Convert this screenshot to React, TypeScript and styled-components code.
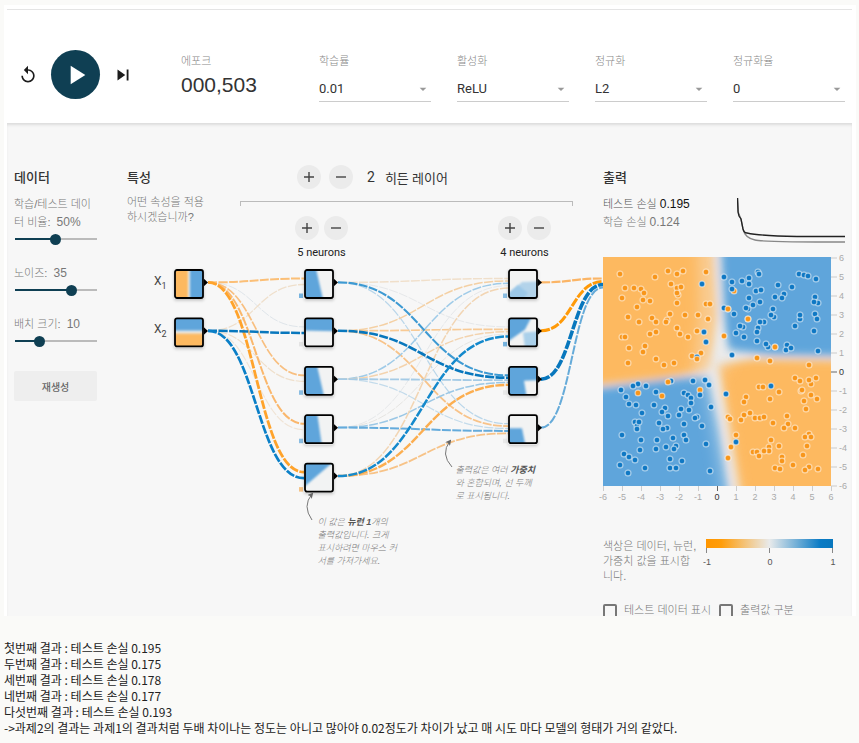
import React, { useState } from "react";
import styled, { createGlobalStyle } from "styled-components";
import { MdReplay, MdPlayArrow, MdSkipNext, MdArrowDropDown } from "react-icons/md";

const ORANGE = "#fdb960";
const BLUE = "#5ea5db";
const PALE = "#e8eaeb";

const sans = `"Liberation Sans", "Noto Sans CJK KR", sans-serif`;
const ui = `Roboto, "Noto Sans CJK KR", sans-serif`;

const GlobalStyle = createGlobalStyle`
  *, *::before, *::after { box-sizing: border-box; }
  body {
    margin: 0;
    background: #fafaf8;
    color: #222;
    font-family: ${sans};
    font-size: 12px;
  }
`;

const Page = styled.main`
  padding: 5px 3px 8px 4px;
`;

const Card = styled.section`
  padding: 4px 4px 0 3px;
  background: #fff;
`;

const TopBar = styled.header`
  display: flex;
  height: 114px;
  border-top: 1px solid #e4e4e4;
  padding-right: 7px;
`;

const Playback = styled.div`
  flex: 0 0 174px;
  display: flex;
  align-items: center;
  gap: 12px;
  padding: 15px 0 0 10px;
  height: 114px;
`;

const IconButton = styled.button`
  display: flex;
  align-items: center;
  justify-content: center;
  width: 22px;
  height: 32px;
  padding: 0;
  border: 0;
  background: none;
  color: #1c1c1c;
  cursor: pointer;
`;

const PlayButton = styled(IconButton)`
  width: 49px;
  height: 49px;
  border-radius: 50%;
  background: #0f3f53;
  color: #fff;
`;

const Fields = styled.div`
  flex: 1;
  display: grid;
  grid-template-columns: repeat(5, minmax(0, 1fr));
  gap: 26px;
  padding-top: 43px;
`;

const Field = styled.div`
  display: flex;
  flex-direction: column;
  font-family: ${ui};
`;

const FieldLabel = styled.label`
  height: 18px;
  line-height: 18px;
  font-size: 11px;
  font-weight: 300;
  color: #888;
`;

const Epoch = styled.output`
  line-height: 28px;
  font-family: ${sans};
  font-size: 21px;
  color: #333;
`;

const SelectWrap = styled.div`
  display: flex;
  align-items: center;
  margin-top: 5px;
  height: 26px;
  border-bottom: 1px solid #ccc;

  svg {
    margin-left: -16px;
    color: #999;
    pointer-events: none;
  }
`;

const Select = styled.select`
  flex: 1;
  min-width: 0;
  height: 24px;
  padding: 0;
  border: 0;
  appearance: none;
  background: transparent;
  color: #333;
  font-family: ${ui};
  font-size: 13px;
`;

const Panel = styled.div`
  display: grid;
  grid-template-columns: 83px minmax(0, 1fr) 249px;
  padding: 45px 0 0 7px;
  background: #f7f7f7;
  box-shadow: inset 0 3px 3px -1px #dcdcdc;
`;

const Title = styled.h2`
  margin: 0 0 7px;
  height: 20px;
  line-height: 20px;
  font-size: 13px;
  font-weight: 500;
  color: #333;
`;

const DataColumn = styled.section`
  display: flex;
  flex-direction: column;
`;

const SliderGroup = styled.div`
  margin-bottom: 17px;
`;

const SliderLabel = styled.label`
  display: block;
  line-height: 18px;
  font-size: 11px;
  font-weight: 300;
  color: #777;

  span {
    display: inline-block;
    margin-left: 3px;
    line-height: 16px;
    font-size: 12px;
  }
`;

const Range = styled.input`
  display: block;
  width: calc(100% + 10px);
  height: 16px;
  margin: 0 -5px;
  appearance: none;
  background-color: transparent;
  background-position: center;
  background-repeat: no-repeat;
  background-size: calc(100% - 11px) 2px;

  &::-webkit-slider-thumb {
    appearance: none;
    width: 11px;
    height: 11px;
    border-radius: 50%;
    background: #0f3f53;
  }
`;

const Regenerate = styled.button`
  height: 30px;
  margin-top: 5px;
  border: 0;
  border-radius: 2px;
  background: #eee;
  color: #666;
  font-family: ${sans};
  font-size: 10px;
  font-weight: 500;
`;

const Network = styled.section`
  padding-left: 30px;
`;

const NetworkHead = styled.div`
  display: grid;
  grid-template-columns: 113px minmax(0, 1fr);
  padding-right: 30px;
  height: 94px;
`;

const Hint = styled.p`
  margin: 0;
  line-height: 15px;
  font-size: 11px;
  font-weight: 300;
  color: #777;
`;

const FeatureHead = styled.div`
  width: 83px;
`;

const HiddenTitle = styled.div`
  display: flex;
  align-items: center;
  gap: 8px;
  height: 24px;
  margin: -3px 0 12px 57px;
  font-family: ${ui};
  font-size: 13px;
  color: #333;
`;

const HiddenCount = styled.span`
  margin: 0 2px 0 6px;
  font-size: 14px;
`;

const Bracket = styled.div`
  height: 5px;
  border: 1px solid #bbb;
  border-bottom: 0;
`;

const LayerHeads = styled.div`
  display: flex;
  justify-content: space-between;
  padding: 10px 22px 0 55px;
`;

const LayerHead = styled.div`
  display: flex;
  flex-direction: column;
  align-items: center;
  gap: 6px;
  line-height: 14px;
  font-family: ${ui};
  font-size: 11px;
  color: #222;
`;

const ButtonPair = styled.div`
  display: flex;
  gap: 5px;
`;

const RoundButton = styled.button`
  display: flex;
  align-items: center;
  justify-content: center;
  width: 24px;
  height: 24px;
  padding: 0;
  border: 0;
  border-radius: 50%;
  background: #ebebeb;
`;

const Canvas = styled.div`
  position: relative;
`;

const Drawing = styled.svg`
  display: block;
  width: 100%;
  height: auto;
  overflow: visible;
`;

const Callout = styled.p<{ $left: number; $top: number }>`
  position: absolute;
  left: ${(p) => p.$left}%;
  top: ${(p) => p.$top}%;
  width: 86px;
  margin: 0;
  line-height: 13px;
  font-size: 9px;
  font-style: italic;
  font-weight: 300;
  color: #777;
  word-break: break-all;

  b {
    font-weight: 700;
    color: #555;
  }
`;

const OutputHead = styled.div`
  display: flex;
  justify-content: space-between;
  height: 62px;
  padding-right: 7px;
`;

const Loss = styled.div<{ $strong?: boolean }>`
  line-height: 18px;
  font-size: 11px;
  font-weight: 300;
  color: ${(p) => (p.$strong ? "#555" : "#777")};

  span {
    font-size: 12px;
    color: ${(p) => (p.$strong ? "#111" : "#777")};
  }
`;

const LegendRow = styled.div`
  display: flex;
  justify-content: space-between;
  margin-top: 35px;
  padding-right: 15px;
`;

const LegendText = styled(Hint)`
  width: 94px;
  word-break: break-all;
`;

const Checks = styled.div`
  display: flex;
  gap: 8px;
  height: 12px;
  margin-top: 20px;
  overflow: hidden;
`;

const Check = styled.label`
  display: flex;
  align-items: flex-start;
  gap: 7px;
  line-height: 12px;
  font-size: 11px;
  font-weight: 300;
  color: #777;
  white-space: nowrap;

  input {
    flex: none;
    appearance: none;
    width: 14px;
    height: 14px;
    margin: 0;
    border: 2px solid #777;
    border-radius: 2px;
  }
`;

const Results = styled.section`
  margin-top: 24px;
  line-height: 16px;
  font-family: "Noto Sans CJK KR", sans-serif;
  font-size: 12px;
  color: #222;

  p {
    margin: 0;
  }
`;

/* ---------- top bar and data column ---------- */

function SelectField({ id, label, value, options }: { id: string; label: string; value: string; options: string[] }) {
  return (
    <Field>
      <FieldLabel htmlFor={id}>{label}</FieldLabel>
      <SelectWrap>
        <Select id={id} defaultValue={value}>
          {options.map((o) => (
            <option key={o}>{o}</option>
          ))}
        </Select>
        <MdArrowDropDown size={16} />
      </SelectWrap>
    </Field>
  );
}

function Slider(props: { id: string; label: string; unit?: string; min: number; max: number; initial: number }) {
  const { id, label, unit = "", min, max, initial } = props;
  const [value, setValue] = useState(initial);
  const pct = ((value - min) / (max - min)) * 100;
  return (
    <SliderGroup>
      <SliderLabel htmlFor={id}>
        {`${label}: `}
        <span>{`${value}${unit}`}</span>
      </SliderLabel>
      <Range
        id={id}
        type="range"
        min={min}
        max={max}
        value={value}
        onChange={(e) => setValue(Number(e.target.value))}
        style={{ backgroundImage: `linear-gradient(to right, #0f3f53 ${pct}%, #bbb ${pct}%)` }}
      />
    </SliderGroup>
  );
}

function PlusMinus() {
  return (
    <>
      <RoundButton aria-label="추가">
        <svg width="12" height="12" viewBox="0 0 12 12" stroke="#444" strokeWidth="1.4">
          <path d="M1 6H11M6 1V11" />
        </svg>
      </RoundButton>
      <RoundButton aria-label="제거">
        <svg width="12" height="12" viewBox="0 0 12 12" stroke="#444" strokeWidth="1.4">
          <path d="M1 6H11" />
        </svg>
      </RoundButton>
    </>
  );
}

/* ---------- network diagram ---------- */

const PITCH = 48.4;
const top = (row: number) => 269 + row * PITCH;

// [source row, target row, colour, width]
type Link = [number, number, string, number];

const inputLinks: Link[] = [
  [0, 1, "#dfe5ea", 1],
  [1, 0, "#efdfcb", 1.3],
  [1, 2, "#efdfcb", 1.2],
  [1, 3, "#f0e4d6", 1.2],
  [0, 0, "#fbbf77", 2],
  [0, 2, "#f8bf80", 1.7],
  [0, 3, "#fab76c", 2],
  [0, 4, "#ffa32b", 2.8],
  [1, 1, "#0877bd", 2.5],
  [1, 4, "#0a7fc7", 2.7],
];

const hiddenLinks: Link[] = [
  [0, 1, "#e6e8ea", 1],
  [3, 0, "#e6e8ea", 1],
  [3, 1, "#e6e5e2", 1],
  [0, 0, "#f0dfca", 1.4],
  [0, 3, "#b9d6ea", 1.2],
  [2, 3, "#c3dbeb", 1.2],
  [1, 0, "#f4d0a4", 1.5],
  [1, 1, "#f8ca95", 1.7],
  [1, 3, "#f8c389", 1.8],
  [2, 0, "#9fcbe8", 1.5],
  [2, 1, "#f3d3ae", 1.5],
  [2, 2, "#a5cbe6", 1.8],
  [3, 2, "#9bc7e5", 1.5],
  [3, 3, "#64abdc", 2],
  [4, 0, "#f2d5b3", 1.5],
  [4, 3, "#f7c388", 1.8],
  [4, 2, "#fcae50", 2.4],
  [0, 2, "#3d9ad3", 2.1],
  [1, 2, "#0877bd", 2.6],
  [4, 1, "#1489cc", 2.5],
];

const outputLinks: Link[] = [
  [3, 0, "#66abd9", 2],
  [0, 0, "#fbb566", 2.2],
  [1, 0, "#ff9a08", 3],
  [2, 0, "#0877bd", 3.6],
];

function Links({ from, to, inputs, items }: { from: number; to: number; inputs: number; items: Link[] }) {
  const mid = (from + to) / 2;
  return (
    <g fill="none" strokeDasharray="9 1.4">
      {items.map(([a, b, color, w]) => {
        const y1 = top(a) + 13.4;
        const y2 = top(b) + 15.5 + ((a - inputs / 2) / inputs) * 12;
        return <path key={`${a}-${b}`} d={`M${from} ${y1}C${mid} ${y1} ${mid} ${y2} ${to} ${y2}`} stroke={color} strokeWidth={w} />;
      })}
    </g>
  );
}

type Patch = [string, string];

function Neuron({ x, row, base = "#f2f3f3", patches, bias }: { x: number; row: number; base?: string; patches: Patch[]; bias?: string }) {
  return (
    <g transform={`translate(${x} ${top(row)})`}>
      {bias && <rect x="-5" y="24.5" width="4" height="4.5" fill={bias} />}
      <path d="M29 9L34 13.5L29 18Z" fill="#000" />
      <rect width="30" height="30" rx="2" fill={base} filter="url(#shade)" />
      <g clipPath="url(#thumb)">
        {patches.map(([points, fill]) => (
          <polygon key={points} points={points} fill={fill} filter="url(#soft)" />
        ))}
      </g>
      <rect x="1" y="1" width="28" height="28" rx="2" fill="none" stroke="#000" strokeWidth="1.8" />
    </g>
  );
}

const fullLeft = "-9,-9 11,-9 22,39 -9,39";

function NetworkDiagram() {
  return (
    <Drawing viewBox="127 262 476 310" role="img" aria-label="신경망">
      <defs>
        <filter id="soft" x="-30%" y="-30%" width="160%" height="160%">
          <feGaussianBlur stdDeviation="1.2" />
        </filter>
        <filter id="shade" x="-30%" y="-30%" width="160%" height="170%">
          <feDropShadow dx="0" dy="1.5" stdDeviation="1.5" floodOpacity="0.22" />
        </filter>
        <clipPath id="thumb">
          <rect x="1" y="1" width="28" height="28" />
        </clipPath>
        <marker id="tip" markerWidth="6" markerHeight="6" refX="4" refY="3" orient="auto" markerUnits="userSpaceOnUse">
          <path d="M0 0L6 3L0 6L1.5 3Z" fill="#666" />
        </marker>
      </defs>
      <Links from={208} to={304} inputs={2} items={inputLinks} />
      <Links from={338} to={508} inputs={5} items={hiddenLinks} />
      <Links from={541} to={603} inputs={4} items={outputLinks} />

      <g fill="#444" fontFamily={ui} fontSize="12">
        <text x="154" y="285">X<tspan fontSize="9" dy="4">1</tspan></text>
        <text x="154" y="333">X<tspan fontSize="9" dy="4">2</tspan></text>
      </g>

      <Neuron x={174} row={0} base={PALE} patches={[["-9,-9 14,-9 14,39 -9,39", ORANGE], ["16,-9 39,-9 39,39 16,39", BLUE]]} />
      <Neuron x={174} row={1} base={PALE} patches={[["-9,-9 39,-9 39,13 -9,13", BLUE], ["-9,16 39,16 39,39 -9,39", ORANGE]]} />

      <Neuron x={304} row={0} bias="#76b3df" patches={[["-9,-9 10,-9 21,39 -9,39", BLUE]]} />
      <Neuron x={304} row={1} bias="#e4e4e4" patches={[["-9,-9 39,-9 39,14 -9,13", BLUE]]} />
      <Neuron x={304} row={2} bias="#8abde2" patches={[[fullLeft, BLUE]]} />
      <Neuron x={304} row={3} bias="#8abde2" patches={[["-9,-9 12,-9 19,39 -9,39", BLUE]]} />
      <Neuron x={304} row={4} bias="#f4c285" patches={[["-9,-9 39,-9 -9,32", BLUE]]} />

      <Neuron x={508} row={0} bias="#8abde2" patches={[["0,26 14,13 39,12 39,39 -9,39", "#b3d3ea"], ["-9,32 10,16 20,24 8,39 -9,39", "#9cc8e8"]]} />
      <Neuron x={508} row={1} bias="#76b3df" patches={[["15,15 39,13 39,39 18,39", "#aad0ea"], ["-9,-9 28,-9 17,12 0,24 -9,28", BLUE]]} />
      <Neuron x={508} row={2} bias="#e9e9e9" patches={[["-9,-9 39,-9 39,14 16,15 20,39 -9,39", BLUE]]} />
      <Neuron x={508} row={3} bias="#e9e9e9" patches={[["-9,14 14,14 19,39 -9,39", BLUE]]} />

      <g fill="none" stroke="#777">
        <path d="M312 520Q302 506 312 494" markerEnd="url(#tip)" />
        <path d="M452 467Q440 454 450 441" markerEnd="url(#tip)" />
      </g>
    </Drawing>
  );
}

/* ---------- output plot ---------- */

const orangeDots =
  "17,17 52,20 65,14 74,17 80,14 103,15 68,27 22,31 31,31 38,32 41,36 19,41 40,43 47,44 74,31 78,30 75,38 74,36 74,46 34,50 103,47 107,47 25,60 36,65 49,61 53,65 67,57 64,63 63,65 82,58 95,58 105,62 74,71 77,77 85,80 94,74 53,75 47,77 19,80 22,80 26,91 42,89 40,95 53,102 25,106 61,108 71,106 89,99 98,96 131,34 125,52 145,62 121,79 172,90 154,101 167,104 206,108 35,136 59,139 97,133 192,121 197,124 213,121 208,127 206,123 156,130 160,130 176,135 167,142 143,140 141,145 198,134 199,133 208,138 214,142 201,144 203,152 147,156 141,158 138,163 125,160 127,162 152,161 157,161 161,160 184,159 185,167 181,171 192,171 170,166 133,178 128,190 125,201 168,183 176,189 166,190 166,194 161,194 150,195 154,195 156,199 179,200 179,204 172,211 177,212 190,208 206,177 202,180 208,180 204,189 200,198 206,210 202,213 215,212";

const blueDots =
  "99,27 101,75 103,85 94,100 121,20 129,25 129,32 139,24 146,21 146,27 155,15 156,17 146,41 153,34 158,33 150,48 157,45 145,52 143,51 121,51 131,57 175,28 189,30 181,37 179,41 172,40 170,52 171,60 168,58 196,17 201,18 205,19 213,22 212,40 215,46 211,45 212,57 214,62 197,62 197,58 192,69 211,74 161,65 157,65 155,71 154,75 140,70 137,69 133,76 141,80 154,84 165,90 163,87 184,88 183,93 188,91 215,94 129,98 68,124 102,123 90,124 106,128 35,127 30,129 43,129 18,133 23,140 53,135 26,147 33,148 51,148 62,151 59,155 65,159 39,156 81,136 85,138 88,141 88,146 97,138 78,152 76,158 86,153 108,150 94,160 92,161 32,165 34,169 36,165 34,172 56,166 64,171 60,172 81,167 99,169 19,178 38,183 54,183 70,181 81,178 83,183 103,187 37,193 53,192 63,190 73,189 71,192 21,197 26,200 32,203 67,202 79,204 17,208 25,216 42,211 67,211 73,211 107,214 168,129 123,137 133,185";

// Orange points that lie above overlapping blue ones.
const topDots = "65,125 94,102 145,62 172,90 125,52";

const toPoints = (s: string) => s.split(" ").map((p) => p.split(",").map(Number));

function Dots({ data, fill }: { data: string; fill: string }) {
  return (
    <g fill={fill} stroke="#fff" strokeOpacity="0.55" strokeWidth="1.2">
      {toPoints(data).map(([x, y], i) => (
        <circle key={i} cx={x} cy={y} r="2.9" />
      ))}
    </g>
  );
}

function HeatMap() {
  const ticks = Array.from({ length: 13 }, (_, i) => i - 6);
  return (
    <Drawing viewBox="0 0 249 247" role="img" aria-label="출력 분포">
      <defs>
        <clipPath id="plot">
          <rect width="228" height="229" />
        </clipPath>
        <filter id="blend" filterUnits="userSpaceOnUse" x="-60" y="-60" width="350" height="350">
          <feGaussianBlur stdDeviation="4.5" />
        </filter>
        <filter id="wide" filterUnits="userSpaceOnUse" x="-60" y="-60" width="350" height="350">
          <feGaussianBlur stdDeviation="8" />
        </filter>
      </defs>
      <g clipPath="url(#plot)">
        <rect width="228" height="229" fill={PALE} />
        <g filter="url(#blend)">
          <polygon points="-50,-50 109,-50 114,60 106,113 60,121 -50,133" fill={ORANGE} />
          <polygon points="113,-50 280,-50 280,100 170,98 126,93 119,60" fill={BLUE} />
          <polygon points="-50,137 60,123 106,118 117,170 134,280 -50,280" fill={BLUE} />
          <polygon points="114,108 150,102 280,104 280,280 140,280 122,160" fill={ORANGE} />
        </g>
        <path d="M104 -20L106 60L100 110" fill="none" stroke="#f3e6d8" strokeWidth="12" strokeOpacity="0.65" filter="url(#wide)" />
        <path d="M114 -20L118 60L116 100" fill="none" stroke="#eceef0" strokeWidth="5" strokeOpacity="0.7" filter="url(#blend)" />
        <path d="M107 116L119 180L131 250" fill="none" stroke="#eceef0" strokeWidth="9" strokeOpacity="0.7" filter="url(#wide)" />
        <path d="M111 116L124 180L136 250" fill="none" stroke="#efece8" strokeWidth="6" strokeOpacity="0.6" filter="url(#blend)" />
        <path d="M94 116L112 110L122 100" fill="none" stroke="#eeeae6" strokeWidth="12" strokeOpacity="0.6" filter="url(#wide)" />
        <Dots data={orangeDots} fill="#f8961a" />
        <Dots data={blueDots} fill="#0f78c4" />
        <Dots data={topDots} fill="#f8961a" />
      </g>
      <g fontFamily={sans} fontSize="9">
        {ticks.map((t) => {
          const x = (t + 6) * 19;
          const y = 228.5 - x;
          const ink = t === 0 ? "#333" : "#aaa";
          return (
            <g key={t} fill={ink} stroke="none">
              <rect x={x} y="229" width="1" height="5" fill={t === 0 ? "#666" : "#ccc"} />
              <text x={x} y="243" textAnchor="middle">{t}</text>
              <rect x="228" y={y} width="6" height="1" fill={t === 0 ? "#666" : "#ccc"} />
              <text x="236" y={y + 3}>{t}</text>
            </g>
          );
        })}
      </g>
    </Drawing>
  );
}

function LossChart() {
  return (
    <svg width="108" height="52" viewBox="0 0 108 52" fill="none" aria-hidden="true">
      <path d="M0.5 3L1.5 18L4 24L6 34Q8 43 18 45Q26 47 108 47" stroke="#888" strokeWidth="1.3" />
      <path d="M0.500 3L1 17L2 21L4 24L6 34Q7 38 10 38Q24 41 60 41.500H108" stroke="#222" strokeWidth="1.3" />
    </svg>
  );
}

function Legend() {
  return (
    <svg width="134" height="28" viewBox="0 0 134 28" role="img" aria-label="색상 범례">
      <defs>
        <linearGradient id="scale">
          <stop offset="0" stopColor="#ff9600" />
          <stop offset="0.12" stopColor="#ff9d0a" />
          <stop offset="0.5" stopColor="#e8eaeb" />
          <stop offset="0.9" stopColor="#0a7bc5" />
          <stop offset="1" stopColor="#0877bd" />
        </linearGradient>
      </defs>
      <rect x="3" width="127" height="9" fill="url(#scale)" />
      <g fill="#888">
        <rect x="3" y="9" width="1" height="5" />
        <rect x="66" y="9" width="1" height="5" />
        <rect x="129" y="9" width="1" height="5" />
      </g>
      <g fill="#555" fontFamily={sans} fontSize="9" textAnchor="middle">
        <text x="4" y="26">-1</text>
        <text x="67" y="26">0</text>
        <text x="130" y="26">1</text>
      </g>
    </svg>
  );
}

const results = ["첫번째 결과 : 테스트 손실 0.195", "두번째 결과 : 테스트 손실 0.175", "세번째 결과 : 테스트 손실 0.178", "네번째 결과 : 테스트 손실 0.177", "다섯번째 결과 : 테스트 손실 0.193"];

export default function App() {
  return (
    <Page>
      <GlobalStyle />
      <Card>
        <TopBar>
          <Playback>
            <IconButton aria-label="초기화"><MdReplay size={20} /></IconButton>
            <PlayButton aria-label="실행"><MdPlayArrow size={32} /></PlayButton>
            <IconButton aria-label="한 단계"><MdSkipNext size={22} /></IconButton>
          </Playback>
          <Fields>
            <Field>
              <FieldLabel htmlFor="epoch">에포크</FieldLabel>
              <Epoch id="epoch">000,503</Epoch>
            </Field>
            <SelectField id="rate" label="학습률" value="0.01" options={["0.001", "0.01", "0.1", "1"]} />
            <SelectField id="activation" label="활성화" value="ReLU" options={["ReLU", "Tanh", "Sigmoid", "Linear"]} />
            <SelectField id="reg" label="정규화" value="L2" options={["None", "L1", "L2"]} />
            <SelectField id="regRate" label="정규화율" value="0" options={["0", "0.001", "0.01", "0.1"]} />
          </Fields>
        </TopBar>
        <Panel>
          <DataColumn>
            <Title>데이터</Title>
            <Slider id="ratio" label="학습/테스트 데이터 비율" unit="%" min={0} max={100} initial={50} />
            <Slider id="noise" label="노이즈" min={0} max={50} initial={35} />
            <Slider id="batch" label="배치 크기" min={1} max={30} initial={10} />
            <Regenerate>재생성</Regenerate>
          </DataColumn>

          <Network>
            <NetworkHead>
              <FeatureHead>
                <Title>특성</Title>
                <Hint>어떤 속성을 적용하시겠습니까?</Hint>
              </FeatureHead>
              <div>
                <HiddenTitle>
                  <PlusMinus />
                  <HiddenCount>2</HiddenCount>
                  <span>히든 레이어</span>
                </HiddenTitle>
                <Bracket />
                <LayerHeads>
                  {[5, 4].map((n) => (
                    <LayerHead key={n}>
                      <ButtonPair><PlusMinus /></ButtonPair>
                      <span>{`${n} neurons`}</span>
                    </LayerHead>
                  ))}
                </LayerHeads>
              </div>
            </NetworkHead>
            <Canvas>
              <NetworkDiagram />
              <Callout $left={40} $top={82}>
                이 값은 <b>뉴런 1</b>개의<br />출력값입니다. 크게<br />표시하려면 마우스 커서를 가져가세요.
              </Callout>
              <Callout $left={69} $top={65}>
                출력값은 여러 <b>가중치</b><br />와 혼합되며, 선 두께<br />로 표시됩니다.
              </Callout>
            </Canvas>
          </Network>

          <section>
            <Title>출력</Title>
            <OutputHead>
              <div>
                <Loss $strong>테스트 손실 <span>0.195</span></Loss>
                <Loss>학습 손실 <span>0.124</span></Loss>
              </div>
              <LossChart />
            </OutputHead>
            <HeatMap />
            <LegendRow>
              <LegendText>색상은 데이터, 뉴런, 가중치 값을 표시합니다.</LegendText>
              <Legend />
            </LegendRow>
            <Checks>
              <Check><input type="checkbox" />테스트 데이터 표시</Check>
              <Check><input type="checkbox" />출력값 구분</Check>
            </Checks>
          </section>
        </Panel>
      </Card>
      <Results>
        {results.map((r) => (
          <p key={r}>{r}</p>
        ))}
        <p>-&gt;과제2의 결과는 과제1의 결과처럼 두배 차이나는 정도는 아니고 많아야 0.02정도가 차이가 났고 매 시도 마다 모델의 형태가 거의 같았다.</p>
      </Results>
    </Page>
  );
}
